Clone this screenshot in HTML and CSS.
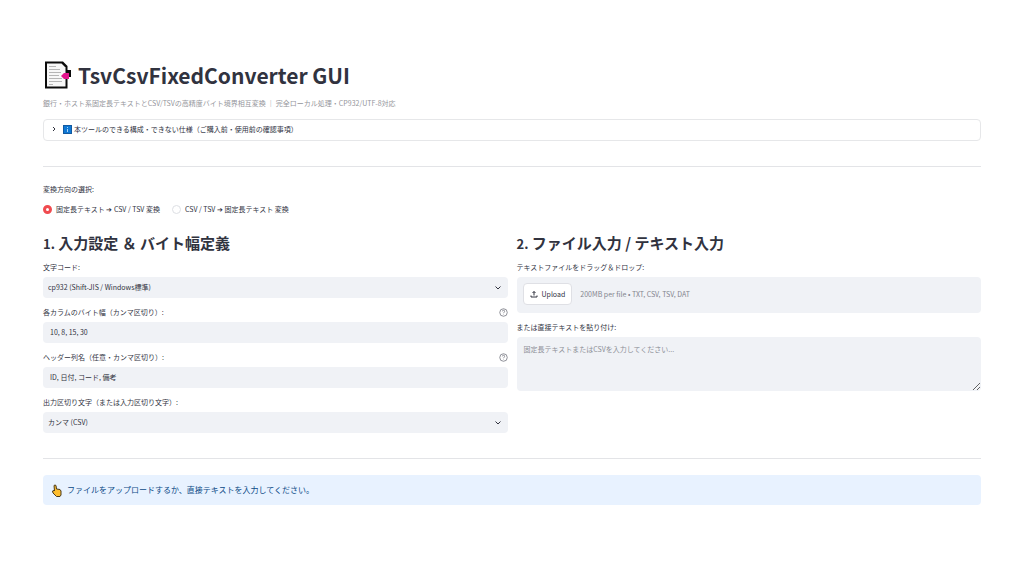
FILE: index.html
```html
<!DOCTYPE html>
<html lang="ja">
<head>
<meta charset="utf-8">
<meta name="viewport" content="width=device-width, initial-scale=1">
<title>TsvCsvFixedConverter GUI</title>
<link rel="stylesheet" href="styles.css">
</head>
<body>
<main class="page">
  <header class="header">
    <h1 class="title">
      <svg class="title-icon" viewBox="0 0 28 28" aria-hidden="true">
        <path d="M2 0.500h18l4.500 4.500v4h3.500v7h-3.500v11.500H2z" fill="#0b0b0b"/>
        <path d="M4 2.500h14.500l4 4V25.500H4z" fill="#f7f7f7"/>
        <path d="M6 5.500h7M6 8.500h11M6 11.500h12M6 14.500h10M6 17.500h13M6 20.500h13M6 23.500h4" stroke="#b5b5b5"/>
        <path d="M18 15l3-3h5v6h-5z" fill="#e3148c"/>
      </svg>
      <span>TsvCsvFixedConverter GUI</span>
    </h1>
    <p class="caption">銀行・ホスト系固定長テキストとCSV/TSVの高精度バイト境界相互変換 ｜ 完全ローカル処理・CP932/UTF-8対応</p>
  </header>

  <details class="expander">
    <summary class="summary">
      <svg class="chevron-right" viewBox="0 0 8 8" aria-hidden="true"><path d="M3 2L5 4L3 6"/></svg>
      <svg class="info-icon" viewBox="0 0 9 9" aria-hidden="true"><rect width="9" height="9" fill="#1259a0"/><rect x="1" y="1" width="7" height="7" fill="#0f78d4"/><path d="M4.500 2v1M4.500 4v3" stroke="#a9d3fa"/></svg>
      <span>本ツールのできる構成・できない仕様（ご購入前・使用前の確認事項）</span>
    </summary>
  </details>

  <hr class="divider">

  <fieldset class="direction">
    <legend class="label">変換方向の選択:</legend>
    <div class="options">
      <label class="option"><input class="radio" type="radio" name="direction" checked><span>固定長テキスト ➔ CSV / TSV 変換</span></label>
      <label class="option"><input class="radio" type="radio" name="direction"><span>CSV / TSV ➔ 固定長テキスト 変換</span></label>
    </div>
  </fieldset>

  <div class="columns">
    <section class="column">
      <h2 class="heading"><span class="number">1.</span> 入力設定 ＆ バイト幅定義</h2>
      <div class="fields">
        <div class="field">
          <div class="label-row"><label class="label" for="encoding">文字コード:</label></div>
          <div class="select-wrap">
            <select class="control select" id="encoding"><option>cp932 (Shift-JIS / Windows標準)</option></select>
            <svg class="chevron-down" viewBox="0 0 8 8" aria-hidden="true"><path d="M1.500 2.500L4 5L6.500 2.500"/></svg>
          </div>
        </div>
        <div class="field">
          <div class="label-row">
            <label class="label" for="widths">各カラムのバイト幅（カンマ区切り）:</label>
            <button class="help" type="button" aria-label="ヘルプ"><svg viewBox="0 0 24 24" aria-hidden="true"><circle cx="12" cy="12" r="10"/><path d="M9 9a3 3 0 0 1 6 0c0 2-3 3-3 5M12 17v1"/></svg></button>
          </div>
          <input class="control" id="widths" type="text" value="10, 8, 15, 30">
        </div>
        <div class="field">
          <div class="label-row">
            <label class="label" for="headers">ヘッダー列名（任意・カンマ区切り）:</label>
            <button class="help" type="button" aria-label="ヘルプ"><svg viewBox="0 0 24 24" aria-hidden="true"><circle cx="12" cy="12" r="10"/><path d="M9 9a3 3 0 0 1 6 0c0 2-3 3-3 5M12 17v1"/></svg></button>
          </div>
          <input class="control" id="headers" type="text" value="ID, 日付, コード, 備考">
        </div>
        <div class="field">
          <div class="label-row"><label class="label" for="separator">出力区切り文字（または入力区切り文字）:</label></div>
          <div class="select-wrap">
            <select class="control select" id="separator"><option>カンマ (CSV)</option></select>
            <svg class="chevron-down" viewBox="0 0 8 8" aria-hidden="true"><path d="M1.500 2.500L4 5L6.500 2.500"/></svg>
          </div>
        </div>
      </div>
    </section>

    <section class="column">
      <h2 class="heading"><span class="number">2.</span> ファイル入力 / テキスト入力</h2>
      <div class="fields">
        <div class="field">
          <div class="label-row"><label class="label" for="upload">テキストファイルをドラッグ＆ドロップ:</label></div>
          <div class="dropzone">
            <button class="upload" id="upload" type="button">
              <svg class="upload-icon" viewBox="0 0 8 8" aria-hidden="true"><path d="M4 5.500V1.500M2.500 3L4 1.500L5.500 3M1 5.500V7H7V5.500"/></svg>
              <span>Upload</span>
            </button>
            <span class="limits">200MB per file • TXT, CSV, TSV, DAT</span>
          </div>
        </div>
        <div class="field">
          <div class="label-row"><label class="label" for="paste">または直接テキストを貼り付け:</label></div>
          <textarea class="control textarea" id="paste" placeholder="固定長テキストまたはCSVを入力してください..."></textarea>
        </div>
      </div>
    </section>
  </div>

  <hr class="divider">

  <div class="alert" role="status">
    <svg class="hand" viewBox="0 0 12 13" aria-hidden="true"><path d="M3 1.500Q4 0.500 5 1.500L5.500 5L9 5.500L10 7V11L9 12.500H5.500L2 9L1.500 7L3 6.500L3.500 7z" fill="#fdbd2e" stroke="#4a3a1c" stroke-linejoin="round"/></svg>
    <span>ファイルをアップロードするか、直接テキストを入力してください。</span>
  </div>
</main>
</body>
</html>
```
FILE: styles.css
```css
* {
  box-sizing: border-box;
}

body {
  margin: 0;
  background: #fff;
  color: #31333f;
  font-family: "Noto Sans CJK JP", "Noto Sans", sans-serif;
  font-size: 7px;
  line-height: 12px;
}

button,
input,
select,
textarea {
  font: inherit;
  color: inherit;
}

.page {
  padding: 59px 43px;
}

.title {
  display: flex;
  align-items: center;
  gap: 7px;
  margin: 0;
  font-size: 21px;
  line-height: 32px;
}

.title-icon {
  width: 28px;
  height: 28px;
}

.caption {
  margin: 6px 0 10px;
  color: #94959b;
}

.expander {
  border: 1px solid #e6e7e9;
  border-radius: 4px;
}

.summary {
  display: flex;
  align-items: center;
  padding: 3px 6px 5px;
  list-style: none;
  cursor: pointer;
}

.chevron-right,
.chevron-down {
  width: 8px;
  height: 8px;
  fill: none;
  stroke: #31333f;
}

.info-icon {
  width: 9px;
  height: 9px;
  margin: 0 2px 0 5px;
}

.divider {
  height: 1px;
  margin: 25px 0 16px;
  border: 0;
  background: #e3e4e7;
}

.direction {
  margin: 0;
  padding: 0;
  border: 0;
}

.label {
  display: block;
  padding: 0;
}

.options {
  display: flex;
  flex-wrap: wrap;
  gap: 12px;
  margin-top: 8px;
}

.option {
  display: flex;
  align-items: center;
  gap: 4px;
}

.radio {
  appearance: none;
  width: 9px;
  height: 9px;
  margin: 0;
  border: 1px solid #dddfe4;
  border-radius: 50%;
  background: #fff;
}

.radio:checked {
  border: 3px solid #f04b4f;
}

.columns {
  display: grid;
  grid-template-columns: 1fr 1fr;
  gap: 9px;
  margin-top: 16px;
}

.heading {
  margin: 0 0 6px;
  font-size: 15px;
  line-height: 24px;
}

.number {
  font-size: 13px;
  line-height: 1;
}

.fields {
  display: flex;
  flex-direction: column;
  gap: 8px;
}

.label-row {
  display: flex;
  align-items: center;
  justify-content: space-between;
  height: 12px;
  margin-bottom: 4px;
}

.control {
  display: block;
  width: 100%;
  height: 21px;
  padding: 0 7px 2px;
  border: 0;
  border-radius: 4px;
  background: #f0f2f6;
}

.select-wrap {
  display: grid;
  align-items: center;
}

.select-wrap > * {
  grid-area: 1 / 1;
}

.select {
  appearance: none;
  padding: 0 5px 2px;
}

.chevron-down {
  justify-self: end;
  margin-right: 6px;
  pointer-events: none;
}

.help {
  display: flex;
  padding: 0;
  border: 0;
  background: none;
}

.help svg {
  width: 9px;
  height: 9px;
  fill: none;
  stroke: #6c6e78;
  stroke-width: 2;
}

.dropzone {
  display: flex;
  align-items: center;
  gap: 8px;
  padding: 6px 6px 8px;
  border-radius: 4px;
  background: #f0f2f6;
}

.upload {
  display: flex;
  align-items: center;
  gap: 4px;
  height: 22px;
  padding: 0 6px;
  border: 1px solid #dfe0e5;
  border-radius: 4px;
  background: #fff;
}

.upload-icon {
  width: 8px;
  height: 8px;
  fill: none;
  stroke: #31333f;
}

.limits {
  color: #83858e;
}

.textarea {
  height: 54px;
  padding: 6px 7px;
}

.textarea::placeholder {
  color: #8d8f97;
}

.alert {
  display: flex;
  align-items: center;
  gap: 4px;
  padding: 8px;
  border-radius: 4px;
  background: #e8f2ff;
  color: #0b4a86;
  font-size: 8px;
  line-height: 14px;
}

.hand {
  width: 12px;
  height: 13px;
}
```
